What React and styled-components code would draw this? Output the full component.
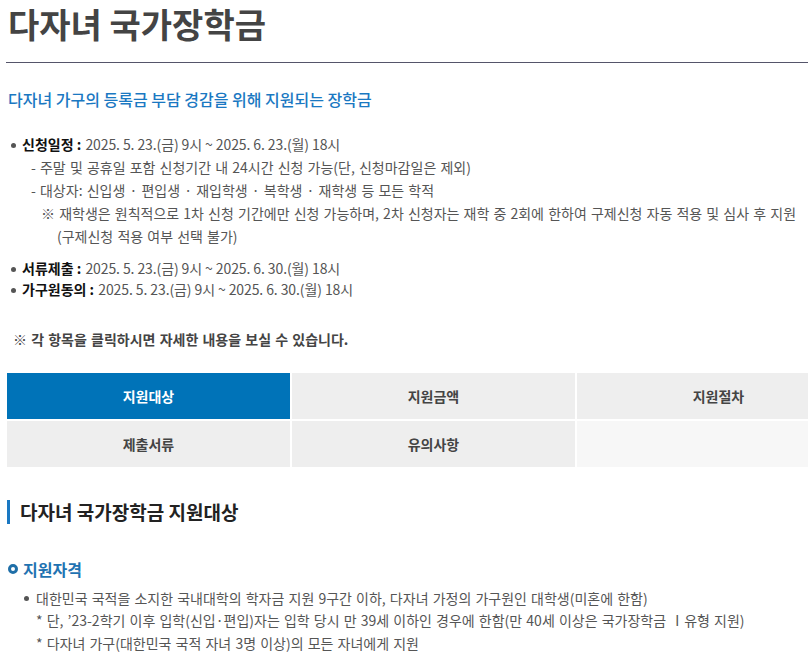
import React from "react";
import styled, { createGlobalStyle } from "styled-components";

const Global = createGlobalStyle`
  html, body { margin: 0; padding: 0; background: #fff; overflow: hidden; }
  body { font-family: "Noto Sans CJK KR", "Noto Sans", sans-serif; color: #555; }
  * { box-sizing: border-box; }
`;

const Page = styled.div`
  width: 860px;
  padding: 0 0 0 7px;
`;

const Title = styled.h1`
  margin: 0;
  padding: 3px 0 0 1px;
  height: 56px;
  font-size: 34px;
  line-height: 42px;
  font-weight: 700;
  color: #444;
`;

const Rule = styled.hr`
  margin: 6px 0 0 -1px;
  border: 0;
  border-top: 1px solid #55556a;
  height: 0;
`;

const Lead = styled.p`
  margin: 26px 0 0 1px;
  font-size: 16px;
  line-height: 21px;
  color: #1a78c2;
  font-weight: 500;
`;

const InfoList = styled.ul`
  list-style: none;
  margin: ${(p) => p.$top}px 0 0 0;
  padding: 0 0 0 ${(p) => p.$pad}px;
`;

const InfoItem = styled.li`
  position: relative;
  padding-left: ${(p) => p.$gap || 10}px;
  font-size: 14px;
  word-spacing: 1px;
  line-height: ${(p) => p.$lh || 22}px;
  color: #555;
  &::before {
    content: "";
    position: absolute;
    left: 0;
    top: ${(p) => (p.$lh || 22) / 2 - 2}px;
    width: 5px;
    height: 5px;
    border-radius: 50%;
    background: #555;
  }
`;

const Label = styled.b`
  color: #111;
  font-weight: 700;
  word-spacing: 0;
`;

const DateText = styled.span`
  word-spacing: 0;
  letter-spacing: -0.1px;
`;

const SubLine = styled.div`
  padding-left: ${(p) => p.$indent}px;
  line-height: 23px;
  color: #555;
`;

const Notice = styled.p`
  margin: 29px 0 0 6px;
  font-size: 14px;
  word-spacing: 1px;
  font-weight: 700;
  color: #444;
  line-height: 20px;
`;

const Tabs = styled.div`
  margin-top: 24px;
  display: grid;
  grid-template-columns: repeat(3, 1fr);
  gap: 2px;
`;

const Tab = styled.div`
  height: 46px;
  display: flex;
  align-items: center;
  justify-content: center;
  font-size: 14px;
  font-weight: 700;
  color: ${(p) => (p.$active ? "#fff" : "#444")};
  background: ${(p) => (p.$active ? "#0073b8" : p.$empty ? "#f7f7f7" : "#eeeeee")};
`;

const SectionTitle = styled.h2`
  margin: 33px 0 0 0;
  border-left: 3px solid #1a78c2;
  padding-left: 10px;
  font-size: 19px;
  line-height: 24px;
  font-weight: 700;
  color: #222;
`;

const SubTitle = styled.h3`
  margin: 35px 0 0 1px;
  display: flex;
  align-items: center;
  gap: 5px;
  font-size: 16px;
  line-height: 20px;
  font-weight: 700;
  color: #1f73b2;
`;

const Ring = styled.span`
  width: 10px;
  height: 10px;
  border: 3px solid #1f6fa8;
  border-radius: 50%;
  display: inline-block;
`;

export default function App() {
  return (
    <Page>
      <Global />
      <Title>다자녀 국가장학금</Title>
      <Rule />
      <Lead>다자녀 가구의 등록금 부담 경감을 위해 지원되는 장학금</Lead>
      <InfoList $top={23} $pad={4}>
        <InfoItem $lh={23} $gap={11}>
          <Label>신청일정 :</Label> <DateText>2025. 5. 23.(금) 9시 ~ 2025. 6. 23.(월) 18시</DateText>
          <SubLine $indent={9}>- 주말 및 공휴일 포함 신청기간 내 24시간 신청 가능(단, 신청마감일은 제외)</SubLine>
          <SubLine $indent={9}>- 대상자: 신입생 · 편입생 · 재입학생 · 복학생 · 재학생 등 모든 학적</SubLine>
          <SubLine $indent={19}>※ 재학생은 원칙적으로 1차 신청 기간에만 신청 가능하며, 2차 신청자는 재학 중 2회에 한하여 구제신청 자동 적용 및 심사 후 지원</SubLine>
          <SubLine $indent={35}>(구제신청 적용 여부 선택 불가)</SubLine>
        </InfoItem>
      </InfoList>
      <InfoList $top={10} $pad={4}>
        <InfoItem $lh={21} $gap={11}>
          <Label>서류제출 :</Label> <DateText>2025. 5. 23.(금) 9시 ~ 2025. 6. 30.(월) 18시</DateText>
        </InfoItem>
        <InfoItem $lh={21} $gap={11}>
          <Label>가구원동의 :</Label> <DateText>2025. 5. 23.(금) 9시 ~ 2025. 6. 30.(월) 18시</DateText>
        </InfoItem>
      </InfoList>
      <Notice>※ 각 항목을 클릭하시면 자세한 내용을 보실 수 있습니다.</Notice>
      <Tabs>
        <Tab $active>지원대상</Tab>
        <Tab>지원금액</Tab>
        <Tab>지원절차</Tab>
        <Tab>제출서류</Tab>
        <Tab>유의사항</Tab>
        <Tab $empty />
      </Tabs>
      <SectionTitle>다자녀 국가장학금 지원대상</SectionTitle>
      <SubTitle>
        <Ring />
        지원자격
      </SubTitle>
      <InfoList $top={8} $pad={17}>
        <InfoItem $lh={22} $gap={12}>
          대한민국 국적을 소지한 국내대학의 학자금 지원 9구간 이하, 다자녀 가정의 가구원인 대학생(미혼에 한함)
          <SubLine $indent={0}>* 단, ’23-2학기 이후 입학(신입·편입)자는 입학 당시 만 39세 이하인 경우에 한함(만 40세 이상은 국가장학금 Ⅰ유형 지원)</SubLine>
          <SubLine $indent={0}>* 다자녀 가구(대한민국 국적 자녀 3명 이상)의 모든 자녀에게 지원</SubLine>
        </InfoItem>
      </InfoList>
    </Page>
  );
}
